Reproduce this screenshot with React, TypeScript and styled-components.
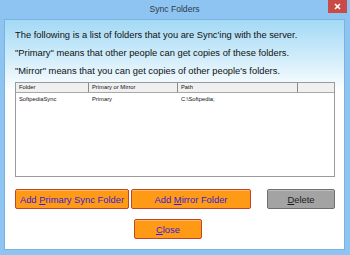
import React from "react";
import styled, { createGlobalStyle } from "styled-components";

const GlobalStyle = createGlobalStyle`
  html, body {
    margin: 0;
    padding: 0;
    background: #ffffff;
  }
  body {
    font-family: "Liberation Sans", Arial, sans-serif;
  }
`;

const Window = styled.div`
  width: 350px;
  height: 255px;
  box-sizing: border-box;
  background: #8dc4f1;
  display: flex;
  flex-direction: column;
  padding: 0 5px 5px 4px;
  overflow: hidden;
`;

const TitleBar = styled.div`
  height: 19px;
  flex: none;
  display: flex;
  align-items: center;
  justify-content: center;
  position: relative;
  color: #2f3b47;
  font-size: 8.6px;
  padding-bottom: 1px;
  box-sizing: border-box;
`;

const CloseButton = styled.div`
  position: absolute;
  top: 0;
  right: -2px;
  width: 19px;
  height: 13px;
  background: #c94b47;
  display: flex;
  align-items: center;
  justify-content: center;
`;

const Client = styled.div`
  flex: 1;
  box-sizing: border-box;
  border: 1px solid #7ab3e0;
  background: linear-gradient(#a3d9f5 0px, #d4eefb 40px, #ffffff 72px);
  padding: 6px 9px 0 10px;
  display: flex;
  flex-direction: column;
`;

const Intro = styled.p`
  margin: 0;
  font-size: 9.35px;
  line-height: 18px;
  color: #111;
  white-space: nowrap;
`;

const ListView = styled.div`
  margin-top: 2px;
  height: 95px;
  flex: none;
  box-sizing: border-box;
  border: 1px solid #9a9a9a;
  background: #fff;
  font-size: 5.8px;
  color: #111;
`;

const HeaderRow = styled.div`
  display: flex;
  height: 9px;
  background: #f0f0f0;
  border-bottom: 1px solid #a8a8a8;
`;

const Row = styled.div`
  display: flex;
  height: 12px;
  align-items: center;
`;

const Cell = styled.div<{ $w: number; $head?: boolean }>`
  width: ${(p) => (p.$w ? `${p.$w}px` : "auto")};
  flex: ${(p) => (p.$w ? "none" : "1")};
  box-sizing: border-box;
  padding-left: 3px;
  line-height: 9px;
  white-space: nowrap;
  overflow: hidden;
  border-right: ${(p) => (p.$head ? "1px solid #8a8a8a" : "none")};
`;

const ButtonRow = styled.div`
  display: flex;
  margin-top: 12px;
  gap: 2px;
  padding-right: 0;
  flex: none;
`;

const Btn = styled.button<{ $w: number; $grey?: boolean }>`
  width: ${(p) => p.$w}px;
  height: 20px;
  flex: none;
  box-sizing: border-box;
  border: 1px solid ${(p) => (p.$grey ? "#6f6f6f" : "#c2452a")};
  border-radius: 2px;
  background: ${(p) => (p.$grey ? "#a3a3a3" : "#ff9a17")};
  color: ${(p) => (p.$grey ? "#1c1c1c" : "#3a1ad6")};
  font-family: "Liberation Sans", Arial, sans-serif;
  font-size: 9.4px;
  white-space: nowrap;
  padding: 0;
  cursor: pointer;
  box-shadow: inset 0 1px 0 rgba(255, 255, 255, 0.3);
  u {
    text-decoration: underline;
  }
`;

const Spacer = styled.div`
  flex: 1;
`;

const CloseRow = styled.div`
  display: flex;
  margin-top: 10px;
  padding-left: 119px;
  flex: none;
`;

export default function App() {
  return (
    <>
      <GlobalStyle />
      <Window>
        <TitleBar>
          Sync Folders
          <CloseButton>
            <svg width="7" height="7" viewBox="0 0 7 7">
              <path d="M1 1L6 6M6 1L1 6" stroke="#fff" strokeWidth="1.6" />
            </svg>
          </CloseButton>
        </TitleBar>
        <Client>
          <Intro>The following is a list of folders that you are Sync'ing with the server.</Intro>
          <Intro>"Primary" means that other people can get copies of these folders.</Intro>
          <Intro>"Mirror" means that you can get copies of other people's folders.</Intro>
          <ListView>
            <HeaderRow>
              <Cell $w={73} $head>Folder</Cell>
              <Cell $w={89} $head>Primary or Mirror</Cell>
              <Cell $w={120} $head>Path</Cell>
              <Cell $w={0}></Cell>
            </HeaderRow>
            <Row>
              <Cell $w={73}>SoftpediaSync</Cell>
              <Cell $w={89}>Primary</Cell>
              <Cell $w={120}>C:\Softpedia;</Cell>
              <Cell $w={0}></Cell>
            </Row>
          </ListView>
          <ButtonRow>
            <Btn $w={114}>Add <u>P</u>rimary Sync Folder</Btn>
            <Btn $w={120}>Add <u>M</u>irror Folder</Btn>
            <Spacer />
            <Btn $w={68} $grey><u>D</u>elete</Btn>
          </ButtonRow>
          <CloseRow>
            <Btn $w={68}><u>C</u>lose</Btn>
          </CloseRow>
        </Client>
      </Window>
    </>
  );
}
